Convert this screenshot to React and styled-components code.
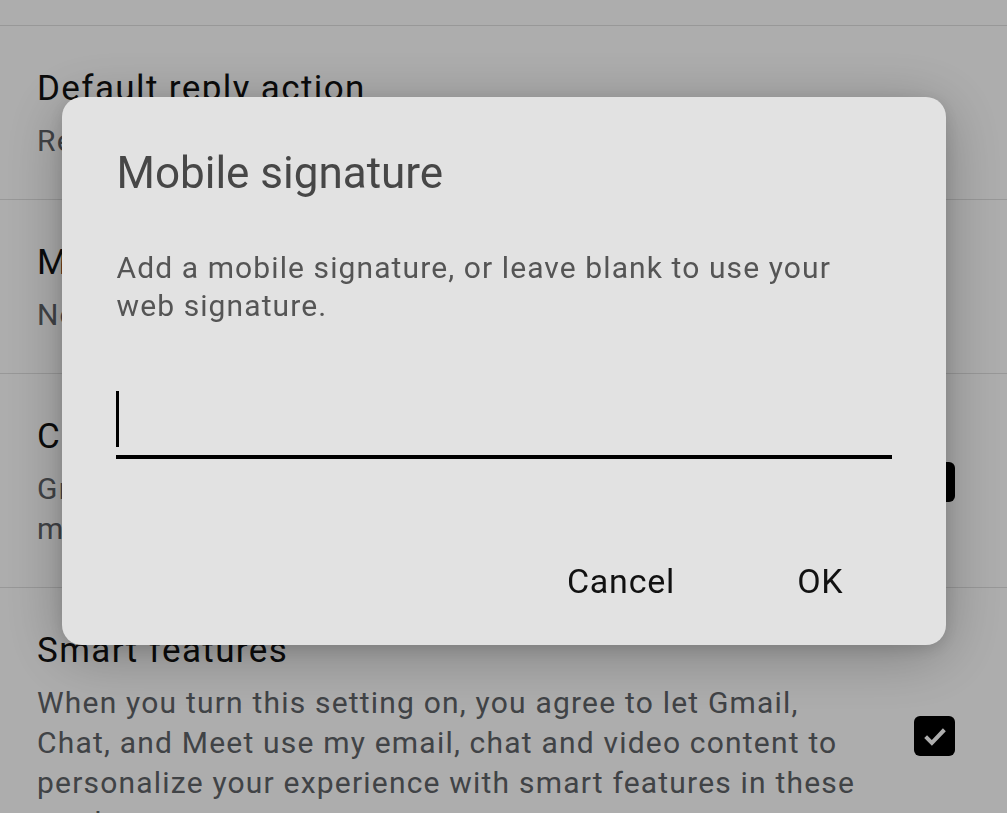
import React from "react";
import styled, { createGlobalStyle } from "styled-components";

const Global = createGlobalStyle`
  html, body {
    margin: 0;
    padding: 0;
    overflow: hidden;
    background: #ffffff;
    font-family: Roboto, "Noto Sans", Arial, sans-serif;
  }
  #root { min-height: 813px; }
`;

const Page = styled.div`
  display: flex;
  flex-direction: column;
  padding-top: 25px;
  height: 813px;
  overflow: hidden;
`;

const Item = styled.div`
  display: flex;
  align-items: center;
  gap: 34px;
  padding: 41px 52px 38px 37px;
  border-top: 1px solid #e0e0e0;
`;

const Texts = styled.div`
  flex: 1;
  display: flex;
  flex-direction: column;
  gap: 10px;
  min-width: 0;
`;

const Title = styled.div`
  font-size: 35px;
  line-height: 44px;
  color: #111111;
  letter-spacing: 1.4px;
  white-space: nowrap;
`;

const Sub = styled.div`
  font-size: 30px;
  line-height: 40px;
  color: #5f6368;
  letter-spacing: 1.2px;
  white-space: nowrap;
`;

const Box = styled.div`
  flex: none;
  width: 41px;
  height: 40px;
  border-radius: 6px;
  background: #000;
  display: flex;
  align-items: center;
  justify-content: center;
`;

const Scrim = styled.div`
  position: fixed;
  inset: 0;
  background: rgba(0, 0, 0, 0.32);
  display: flex;
  justify-content: center;
  align-items: flex-start;
  padding-top: 97px;
`;

const Dialog = styled.div`
  width: 884px;
  box-sizing: border-box;
  background: #e2e2e2;
  border-radius: 20px;
  box-shadow: 0 10px 60px rgba(0, 0, 0, 0.28), 0 4px 16px rgba(0, 0, 0, 0.12);
  display: flex;
  flex-direction: column;
  padding: 50px 54px 32px 54px;
`;

const DTitle = styled.h2`
  margin: 0;
  font-weight: 400;
  font-size: 44px;
  line-height: 52px;
  color: #474747;
  padding-left: 1px;
`;

const DBody = styled.p`
  margin: 50px 0 0;
  padding-left: 1px;
  font-size: 30px;
  line-height: 38px;
  letter-spacing: 1.1px;
  color: #555555;
`;

const Field = styled.div`
  margin-top: 58px;
  border-bottom: 4px solid #000;
  display: flex;
  align-items: flex-start;
  padding-top: 8px;
  height: 64px;
`;

const Caret = styled.span`
  display: block;
  width: 3px;
  height: 56px;
  background: #000;
`;

const Actions = styled.div`
  margin-top: 90px;
  display: flex;
  justify-content: flex-end;
  gap: 122px;
  padding-right: 48px;
`;

const Btn = styled.button`
  border: none;
  background: transparent;
  padding: 12px 0;
  height: 64px;
  font-family: Roboto, "Noto Sans", Arial, sans-serif;
  font-size: 34px;
  line-height: 40px;
  font-weight: 400;
  color: #111111;
  letter-spacing: 0.8px;
  cursor: pointer;
`;

const Check = () => (
  <svg width="30" height="30" viewBox="0 0 24 24">
    <path d="M4.5 12.5l5 5L19.5 7" fill="none" stroke="#fff" strokeWidth="3.2" />
  </svg>
);

export default function App() {
  return (
    <>
      <Global />
      <Page>
        <Item>
          <Texts>
            <Title>Default reply action</Title>
            <Sub>Reply</Sub>
          </Texts>
        </Item>
        <Item>
          <Texts>
            <Title>Mobile signature</Title>
            <Sub>Not set</Sub>
          </Texts>
        </Item>
        <Item>
          <Texts>
            <Title>Conversation view</Title>
            <Sub>
              Group emails with the same topic together for
              <br />
              more organized inbox
            </Sub>
          </Texts>
          <Box>
            <Check />
          </Box>
        </Item>
        <Item>
          <Texts>
            <Title>Smart features</Title>
            <Sub>
              When you turn this setting on, you agree to let Gmail,
              <br />
              Chat, and Meet use my email, chat and video content to
              <br />
              personalize your experience with smart features in these
              <br />
              products.
            </Sub>
          </Texts>
          <Box>
            <Check />
          </Box>
        </Item>
      </Page>
      <Scrim>
        <Dialog role="dialog">
          <DTitle>Mobile signature</DTitle>
          <DBody>
            Add a mobile signature, or leave blank to use your web signature.
          </DBody>
          <Field>
            <Caret />
          </Field>
          <Actions>
            <Btn>Cancel</Btn>
            <Btn>OK</Btn>
          </Actions>
        </Dialog>
      </Scrim>
    </>
  );
}
